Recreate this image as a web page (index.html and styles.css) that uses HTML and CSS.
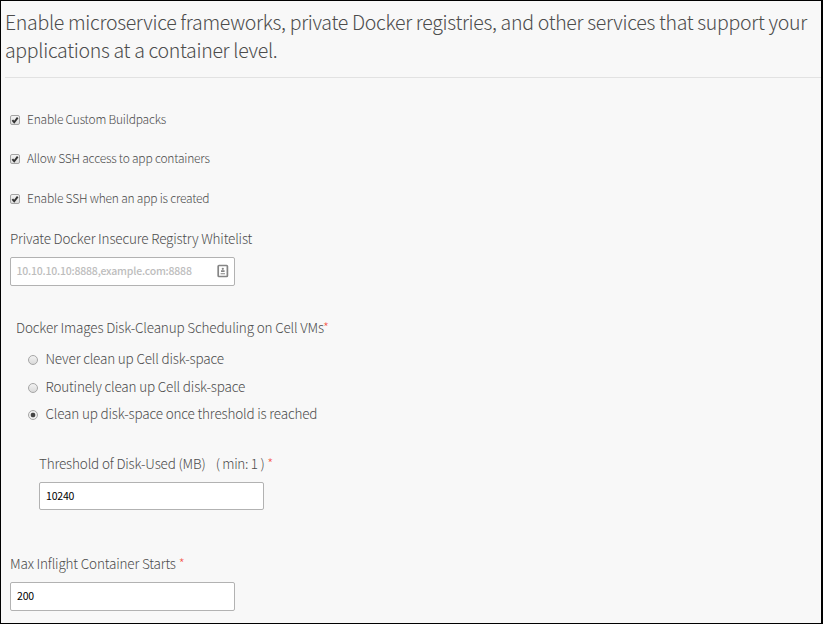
FILE: index.html
```html
<!DOCTYPE html>
<html lang="en">
<head>
<meta charset="utf-8">
<title>Application Containers</title>
<link rel="stylesheet" href="styles.css">
</head>
<body>
<form class="panel">
  <h1 class="intro">Enable microservice frameworks, private Docker registries, and other services that support your<br>applications at a container level.</h1>
  <div class="checks">
    <label class="check"><input type="checkbox" class="box" checked><svg class="tick" viewBox="0 0 10 10"><path d="M2.4 5.2 4.2 7.3 7.7 2.6"/></svg><span>Enable Custom Buildpacks</span></label>
    <label class="check"><input type="checkbox" class="box" checked><svg class="tick" viewBox="0 0 10 10"><path d="M2.4 5.2 4.2 7.3 7.7 2.6"/></svg><span>Allow SSH access to app containers</span></label>
    <label class="check"><input type="checkbox" class="box" checked><svg class="tick" viewBox="0 0 10 10"><path d="M2.4 5.2 4.2 7.3 7.7 2.6"/></svg><span>Enable SSH when an app is created</span></label>
  </div>
  <div class="field">
    <label class="title" for="registry">Private Docker Insecure Registry Whitelist</label>
    <div class="control">
      <input id="registry" class="input" type="text" placeholder="10.10.10.10:8888,example.com:8888">
      <svg class="card-icon" viewBox="0 0 12 14"><rect x="1.2" y="1.5" width="9.2" height="11" rx=".8"/><circle cx="5.8" cy="4.8" r="1.1"/><path d="M4 6.3h3.6v1.7H4zM3.6 9.2h4.4v1H3.6z"/></svg>
    </div>
  </div>
  <fieldset class="cleanup">
    <legend class="title">Docker Images Disk-Cleanup Scheduling on Cell VMs<span class="req">*</span></legend>
    <label class="option"><input class="radio" type="radio" name="cleanup"><span>Never clean up Cell disk-space</span></label>
    <label class="option"><input class="radio" type="radio" name="cleanup"><span>Routinely clean up Cell disk-space</span></label>
    <label class="option"><input class="radio" type="radio" name="cleanup" checked><span>Clean up disk-space once threshold is reached</span></label>
    <div class="threshold">
      <label class="title" for="threshold">Threshold of Disk-Used (MB)<span class="hint">( min: 1 )</span><span class="req">*</span></label>
      <div class="control short"><input id="threshold" class="input value" type="text" value="10240"></div>
    </div>
  </fieldset>
  <div class="field last">
    <label class="title" for="starts">Max Inflight Container Starts<span class="req gap">*</span></label>
    <div class="control"><input id="starts" class="input value" type="text" value="200"></div>
  </div>
</form>
</body>
</html>
```

FILE: styles.css
```css
* { box-sizing: border-box; }
body {
  margin: 0;
  height: 624px;
  overflow: hidden;
  background: #f8f8f8;
  border: 1px solid #000;
  border-right-width: 2px;
  color: #4c4c4c;
  font-family: "Noto Sans CJK SC", "Open Sans", sans-serif;
  font-weight: 300;
  font-size: 13.5px;
  letter-spacing: -0.17px;
  line-height: 18px;
}
.panel { margin: 0; }
.intro {
  margin: 0 0 0 4px;
  height: 77px;
  padding-top: 7px;
  border-bottom: 1px solid #e2e2e2;
  font-size: 19.5px;
  letter-spacing: -0.31px;
  line-height: 28px;
  font-weight: 300;
  white-space: nowrap;
}
.checks { padding: 22px 0 0 9px; }
.check {
  display: flex;
  align-items: center;
  height: 39.5px;
  font-size: 12px;
  letter-spacing: -0.21px;
  line-height: 20px;
  white-space: nowrap;
}
.check span { padding-bottom: 2px; }
.box, .radio { appearance: none; margin: 0; flex: none; width: 10px; height: 10px; }
.box {
  border: 1px solid #a4a4a4;
  border-radius: 2px;
  background: linear-gradient(#f4f4f4, #dedede);
}
.tick { width: 10px; height: 10px; margin: 0 7px 0 -10px; fill: none; stroke: #333; stroke-width: 1.9; }
.field { padding-left: 9px; }
.title { display: block; height: 20px; padding: 0; white-space: nowrap; }
.checks + .field { padding-top: 10px; }
.control { display: flex; align-items: center; width: 225px; height: 29px; margin-top: 8px; }
.short { height: 28px; }
.input {
  width: 225px;
  height: 100%;
  flex: none;
  padding: 0 6px 1px 5.5px;
  border: 1px solid #b2b2b2;
  border-radius: 2px;
  background: #fff;
  color: #000;
  font: 500 10.5px "Noto Sans CJK SC", sans-serif;
  letter-spacing: -0.2px;
}
.value { padding: 0 6px 2px; font-weight: 400; }
.input::placeholder { color: #bdbdbd; opacity: 1; }
.card-icon { width: 12px; height: 14px; margin-left: -18px; fill: #858585; }
.card-icon rect { fill: none; stroke: #858585; stroke-width: 1.7; }
.cleanup { margin: 32px 0 0 15px; padding: 0; border: 0; }
.option { display: flex; align-items: center; gap: 8px; height: 27.5px; padding-left: 12px; white-space: nowrap; }
.option span { margin-left: -0.5px; padding-bottom: 2px; }
.cleanup > .title { margin-bottom: 8px; }
.radio { position: relative; top: 1px; border: 1px solid #a6a6a6; border-radius: 50%; background: linear-gradient(#f2f2f2, #dadada); }
.radio:checked { background: radial-gradient(circle, #444 0 2px, #eee 2.7px); }
.threshold { padding: 26px 0 0 23px; }
.hint { margin-left: 10px; letter-spacing: -0.3px; }
.req { color: #f5564a; }
.hint + .req, .gap { margin-left: 3px; }
.last { padding-top: 44px; }
```
